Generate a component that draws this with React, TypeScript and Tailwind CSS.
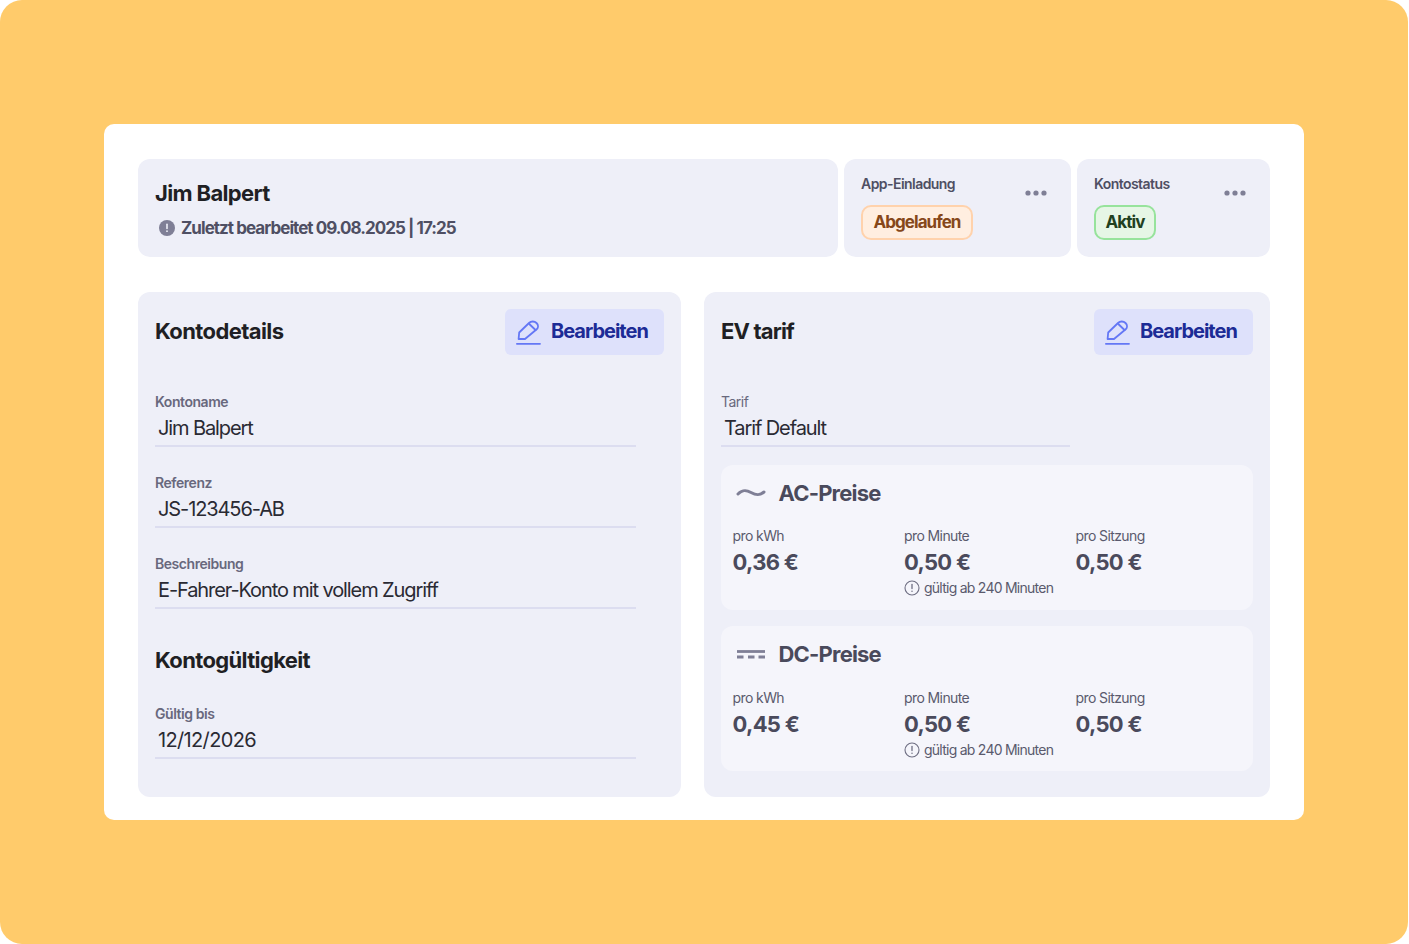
import React from "react";

const font = { fontFamily: '"Inter", "Liberation Sans", sans-serif' };

function Pencil() {
  return (
    <svg width="25" height="25" viewBox="0 0 25 25" fill="none" stroke="#6477f5" strokeWidth="1.8" strokeLinejoin="round" strokeLinecap="round">
      <path d="M2.6 19 L3.2 12.5 L13 3 C15 1 18.5 1 20.5 3 C22.5 5 22.5 7.5 20.7 9.3 L9 19 Z" />
      <path d="M13.3 4 L19.5 10" />
      <path d="M0.9 23.8 H24" />
    </svg>
  );
}

function EditButton() {
  return (
    <div className="flex h-[46px] w-[159px] items-center gap-[10px] rounded-md bg-[#dee1fb] pl-[11px]">
      <Pencil />
      <span className="-translate-y-px text-[20px] leading-[24px] font-bold tracking-[-1px] text-[#1c2b96]">Bearbeiten</span>
    </div>
  );
}

function Dots() {
  return (
    <svg width="22" height="6" viewBox="0 0 22 6" fill="#7f7f96">
      <circle cx="3" cy="3" r="2.6" />
      <circle cx="11" cy="3" r="2.6" />
      <circle cx="19" cy="3" r="2.6" />
    </svg>
  );
}

function Field({ label, value, className, labelClass, valueTrack }: { label: string; value: string; className: string; labelClass?: string; valueTrack?: string }) {
  return (
    <div className={className}>
      <div className={labelClass ?? "text-[14px] leading-[18px] font-semibold tracking-[-0.45px] text-[#68687d]"}>{label}</div>
      <div className={`mt-[5px] h-[31px] border-b-2 border-[#dcddf0] pl-[3px] text-[20px] leading-[24px] text-[#2a2a33] ${valueTrack ?? "tracking-[-1.1px]"}`}>{value}</div>
    </div>
  );
}

function Price({ label, value, note }: { label: string; value: string; note?: boolean }) {
  return (
    <div>
      <div className="text-[14px] leading-[18px] tracking-[-0.6px] text-[#5a5a6d]">{label}</div>
      <div className="mt-[2px] text-[22px] leading-[30px] font-bold tracking-[-0.7px] text-[#4a4a5c]">{value}</div>
      {note && (
        <div className="mt-[2px] flex items-center gap-[4px] text-[14px] leading-[18px] tracking-[-0.75px] text-[#5a5a6d]">
          <svg width="16" height="16" viewBox="0 0 16 16" fill="none" stroke="#6e6e82" strokeWidth="1.1" strokeLinecap="round">
            <circle cx="8" cy="8" r="7" />
            <path d="M8 4.5V8.6" strokeWidth="1.3" />
            <path d="M8 11.2V11.3" strokeWidth="1.5" />
          </svg>
          <span>gültig ab 240 Minuten</span>
        </div>
      )}
    </div>
  );
}

function Prices({ title, icon, kwh, className, gridClass }: { title: string; icon: React.ReactNode; kwh: string; className: string; gridClass: string }) {
  return (
    <div className={`h-[145px] rounded-xl bg-[#f5f5fb] pt-[14px] pr-[11px] pl-[11.5px] ${className}`}>
      <div className="flex h-[28px] items-center gap-[13px] pl-[3px]">
        {icon}
        <span className="text-[22px] font-bold tracking-[-0.8px] text-[#4a4a5c]">{title}</span>
      </div>
      <div className={`grid grid-cols-[171.5px_171.5px_1fr] ${gridClass}`}>
        <Price label="pro kWh" value={kwh} />
        <Price label="pro Minute" value="0,50 €" note />
        <Price label="pro Sitzung" value="0,50 €" />
      </div>
    </div>
  );
}

export default function App() {
  return (
    <div className="h-[944px] w-[1409px] bg-white" style={font}>
      <div className="flex h-[944px] w-[1408px] items-start rounded-[22px] bg-[#ffcb6b] pt-[124px] pl-[104px]">
        <div className="h-[696px] w-[1200px] rounded-[10px] bg-white px-[34px] pt-[35px]">
          <div className="flex h-[98px] gap-[6px]">
            <div className="w-[700px] rounded-xl bg-[#eeeff8] pt-[19px] pl-[17px]">
              <div className="text-[22px] leading-[30px] font-bold tracking-[-0.65px] text-[#1f1f24]">Jim Balpert</div>
              <div className="mt-[8px] flex items-center gap-[6px] pl-[4px]">
                <svg width="16" height="16" viewBox="0 0 16 16">
                  <circle cx="8" cy="8" r="8" fill="#7f7f96" />
                  <path d="M8 4.2V8.4" stroke="#eeeff8" strokeWidth="1.6" strokeLinecap="round" />
                  <circle cx="8" cy="11.2" r="0.9" fill="#eeeff8" />
                </svg>
                <span className="text-[17px] leading-[24px] font-bold tracking-[-0.95px] text-[#4f4f63]">Zuletzt bearbeitet 09.08.2025 | 17:25</span>
              </div>
            </div>
            <div className="relative w-[227px] rounded-xl bg-[#eeeff8] pt-[16px] pl-[17px]">
              <div className="text-[14px] leading-[18px] font-semibold tracking-[-0.55px] text-[#4f4f63]">App-Einladung</div>
              <div className="mt-[12px] flex h-[35px] w-[112px] items-center justify-center rounded-[10px] border-2 border-[#ffd2ac] bg-[#ffeee0] text-[17px] font-bold tracking-[-0.95px] text-[#86471a]">Abgelaufen</div>
              <div className="absolute top-[31px] left-[181px] flex"><Dots /></div>
            </div>
            <div className="relative w-[193px] rounded-xl bg-[#eeeff8] pt-[16px] pl-[17px]">
              <div className="text-[14px] leading-[18px] font-semibold tracking-[-0.55px] text-[#4f4f63]">Kontostatus</div>
              <div className="mt-[12px] flex h-[35px] w-[62px] items-center justify-center rounded-[10px] border-2 border-[#97e39c] bg-[#e6f6e6] text-[17px] font-bold tracking-[-0.95px] text-[#21401f]">Aktiv</div>
              <div className="absolute top-[31px] left-[147px] flex"><Dots /></div>
            </div>
          </div>

          <div className="mt-[35px] flex h-[505px] gap-[23px]">
            <div className="w-[543px] rounded-xl bg-[#eeeff8] px-[17px] pt-[17px]">
              <div className="flex items-center justify-between">
                <span className="-translate-y-px text-[22px] font-bold tracking-[-0.6px] text-[#1f1f24]">Kontodetails</span>
                <EditButton />
              </div>
              <Field className="mt-[38px] w-[481px]" label="Kontoname" value="Jim Balpert" />
              <Field className="mt-[27px] w-[481px]" label="Referenz" value="JS-123456-AB" />
              <Field className="mt-[27px] w-[481px]" label="Beschreibung" value="E-Fahrer-Konto mit vollem Zugriff" />
              <div className="mt-[36px] text-[22px] leading-[30px] font-bold tracking-[-0.65px] text-[#1f1f24]">Kontogültigkeit</div>
              <Field className="mt-[30px] w-[481px]" label="Gültig bis" value="12/12/2026" valueTrack="tracking-[-0.65px]" />
            </div>
            <div className="w-[566px] rounded-xl bg-[#eeeff8] px-[17px] pt-[17px]">
              <div className="flex items-center justify-between">
                <span className="-translate-y-px text-[22px] font-bold tracking-[-0.85px] text-[#1f1f24]">EV tarif</span>
                <EditButton />
              </div>
              <Field className="mt-[38px] w-[349px]" label="Tarif" value="Tarif Default" labelClass="text-[14px] leading-[18px] tracking-[-0.5px] text-[#68687d]" />
              <Prices
                className="mt-[18px]"
                gridClass="mt-[20px]"
                title="AC-Preise"
                kwh="0,36 €"
                icon={
                  <svg width="30" height="12" viewBox="0 0 30 12" fill="none" stroke="#7f7f96" strokeWidth="3" strokeLinecap="round">
                    <path d="M2 7 C6 3 9.5 2.5 15 5.5 C20.5 8.5 24 8.5 28 5" />
                  </svg>
                }
              />
              <Prices
                className="mt-[16px]"
                gridClass="mt-[21px]"
                title="DC-Preise"
                kwh="0,45 €"
                icon={
                  <svg width="30" height="12" viewBox="0 0 30 12" fill="none" stroke="#7f7f96" strokeWidth="2.8">
                    <path d="M1 3.5H29" />
                    <path d="M1 9H7.5M12 9H18.5M22.5 9H29" />
                  </svg>
                }
              />
            </div>
          </div>
        </div>
      </div>
    </div>
  );
}
